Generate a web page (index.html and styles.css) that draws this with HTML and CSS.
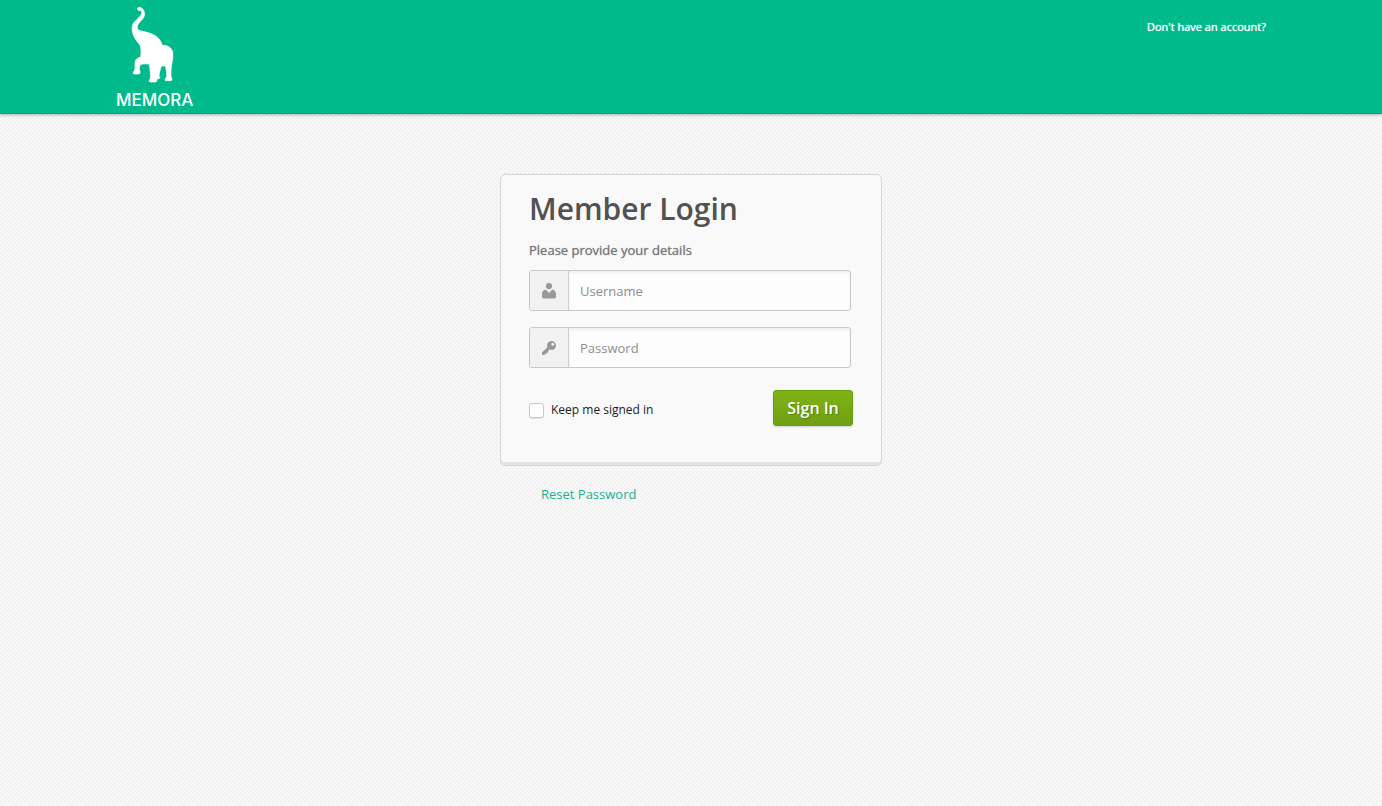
FILE: index.html
```
<!DOCTYPE html>
<html lang="en">
<head>
    <meta charset="UTF-8">
    <meta name="viewport" content="width=device-width, initial-scale=1.0">
    <title>Member Login - Memora</title>
    <link rel="stylesheet" href="styles.css">
</head>
<body>
    <header class="navbar">
        <div class="navbar-inner">
            <a href="#" class="brand">
                <svg class="brand-logo" viewBox="9 0 192 270" aria-hidden="true">
                    <path d="M53 24C58 19 67 24 71 31C76 41 74 50 67 58C59 67 51 74 52 84C53 91 59 92 68 94C88 98 109 105 119 119C124 126 125 131 127 136C139 135 151 140 156 150C161 161 158 178 155 194C153 208 152 222 154 233C157 236 157 240 153 242H136C134 238 135 236 139 234C142 224 139 210 136 198L124 198C121 207 118 219 117 227C121 231 120 236 115 237H110C112 242 110 246 106 246H89C86 242 87 239 91 236C93 222 89 207 88 193C80 191 71 191 63 193C59 197 58 203 58 210C62 215 61 221 56 222H41C38 218 40 214 44 211C46 202 44 190 46 182C49 175 57 173 62 171C64 157 63 145 60 135C51 125 43 114 39 101C35 88 35 76 43 66C51 57 62 49 65 41C66 36 64 33 60 31C56 34 52 30 53 24Z"/>
                </svg>
                <span class="brand-name">MEMORA</span>
            </a>
            <nav class="nav">
                <a href="#">Don't have an account?</a>
            </nav>
        </div>
    </header>

    <main class="account">
        <form class="account-container" action="#" method="post">
            <h1>Member Login</h1>
            <p>Please provide your details</p>

            <div class="field">
                <label for="username" aria-label="Username">
                    <svg viewBox="0 0 16 16" aria-hidden="true">
                        <circle cx="8" cy="3" r="3.1"/>
                        <path d="M4.600 6.500L8 10L11.400 6.500C14 7.200 15 9 15 11.500V13.500C15 15 14.200 15.500 12.500 15.500H3.500C1.800 15.500 1 15 1 13.500V11.500C1 9 2 7.200 4.600 6.500Z"/>
                    </svg>
                </label>
                <input type="text" id="username" name="username" placeholder="Username">
            </div>

            <div class="field">
                <label for="password" aria-label="Password">
                    <svg viewBox="0 0 16 16" aria-hidden="true">
                        <path fill-rule="evenodd" d="M10.500 1C13 1 15 3 15 5.500S13 10 10.500 10C9.800 10 9.200 9.900 8.600 9.600L7 11.200V12.700H5.400V14.200H3.800L3 15H1V12.600L6.300 7.200C5.400 4 7.400 1 10.500 1ZM11.800 2.800A1.500 1.500 0 1 0 11.800 5.800A1.500 1.500 0 1 0 11.800 2.800Z"/>
                    </svg>
                </label>
                <input type="password" id="password" name="password" placeholder="Password">
            </div>

            <div class="login-actions">
                <label class="keep">
                    <input type="checkbox" name="keep">
                    <span>Keep me signed in</span>
                </label>
                <button type="submit" class="button">Sign In</button>
            </div>
        </form>

        <div class="login-extra">
            <a href="#">Reset Password</a>
        </div>
    </main>
</body>
</html>
```
FILE: styles.css
```
* {
    box-sizing: border-box;
}

body {
    margin: 0;
    min-height: 100vh;
    font-family: "Open Sans", sans-serif;
    font-size: 13px;
    line-height: 18px;
    color: #222;
    /* woven paper texture */
    background-color: #f8f8f8;
    background-image:
        radial-gradient(circle at 1px 1px, rgba(0, 0, 0, 0.09) 0, transparent 1px),
        radial-gradient(circle at 1px 1px, rgba(0, 0, 0, 0.07) 0, transparent 1px),
        radial-gradient(circle at 1px 1px, rgba(0, 0, 0, 0.05) 0, transparent 1px);
    background-position: 0 0, 2px 2px, 1px 3px;
    background-size: 4px 4px, 4px 4px, 14px 10px;
}

a {
    color: #19b28c;
    text-decoration: none;
}

a:hover {
    text-decoration: underline;
}

/* Header */

.navbar {
    background: #00ba8b;
    border-bottom: 1px solid #00a77d;
    box-shadow: 0 1px 3px rgba(0, 0, 0, 0.3);
}

.navbar-inner {
    display: flex;
    align-items: flex-start;
    justify-content: space-between;
    max-width: 1170px;
    margin: 0 auto;
    padding: 0 10px;
}

.brand {
    display: flex;
    flex-direction: column;
    align-items: center;
    padding-bottom: 3px;
    color: #fff;
}

.brand-logo {
    width: 64px;
    height: 90px;
    fill: #fff;
    stroke: #fff;
    stroke-width: 2;
}

.brand-name {
    font-family: Inter, sans-serif;
    font-size: 17px;
    font-weight: 500;
    line-height: 20px;
}

.nav {
    padding-top: 17px;
}

.nav a {
    font-size: 11px;
    color: #fff;
    text-shadow: 0 0 1px #fff;
}

/* Login box */

.account {
    width: 382px;
    max-width: 100%;
    margin: 60px auto 0;
}

.account-container {
    padding: 16px 28px 39px;
    background: #f9f9f9;
    border: 1px solid #d5d5d5;
    border-radius: 5px;
    box-shadow: inset 0 -3px 0 #e4e4e4;
}

.account-container h1 {
    margin: 0 0 14px;
    font-size: 30px;
    font-weight: 600;
    line-height: 36px;
    color: #525252;
}

.account-container p {
    margin: 0 0 11px;
    color: #777;
    text-shadow: 0 0 1px #999;
}

.field {
    display: flex;
    height: 41px;
    margin: 0 2px 16px 0;
    border: 1px solid #c8c8c8;
    border-radius: 3px;
    background: #fdfdfd;
    overflow: hidden;
}

.field label {
    display: flex;
    align-items: center;
    justify-content: center;
    width: 39px;
    background: #f2f2f2;
    border-right: 1px solid #d0d0d0;
}

.field svg {
    width: 16px;
    height: 16px;
    fill: #999;
}

.field input {
    flex: 1;
    min-width: 0;
    padding: 0 11px;
    border: 0;
    outline: 0;
    background: transparent;
    box-shadow: inset 0 2px 3px rgba(0, 0, 0, 0.06);
    font: inherit;
    color: #555;
}

.field input::placeholder {
    color: #8e8e8e;
    opacity: 1;
}

.field:focus-within {
    border-color: #00ba8b;
}

.login-actions {
    display: flex;
    align-items: center;
    justify-content: space-between;
    margin-top: 22px;
}

.keep {
    display: flex;
    align-items: center;
    gap: 7px;
    padding-top: 4px;
    font-size: 12px;
    cursor: pointer;
}

.keep input {
    appearance: none;
    width: 15px;
    height: 15px;
    margin: 0;
    border: 1px solid #c8c8c8;
    border-radius: 3px;
    background: #fff;
    box-shadow: 0 1px 1px rgba(0, 0, 0, 0.1);
}

.keep input:checked {
    background: #00ba8b;
}

.button {
    width: 80px;
    height: 36px;
    padding: 0;
    border: 1px solid #6a9a10;
    border-radius: 3px;
    background: linear-gradient(#80b317, #6f9f12);
    box-shadow: 0 1px 2px rgba(0, 0, 0, 0.15);
    font: 600 16px "Open Sans", sans-serif;
    color: #fff;
    text-shadow: 1px 1px 1px rgba(0, 0, 0, 0.25);
    cursor: pointer;
}

.login-extra {
    padding: 19px 41px;
}
```
